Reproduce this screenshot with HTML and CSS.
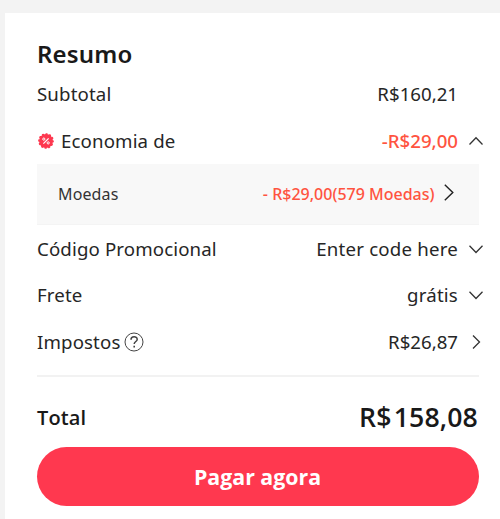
FILE: index.html
```html
<!DOCTYPE html>
<html lang="pt-BR">
<head>
<meta charset="utf-8">
<title>Resumo</title>
<link rel="stylesheet" href="styles.css">
</head>
<body>
<main class="card">
  <h1 class="title">Resumo</h1>
  <div class="row subtotal"><span class="label">Subtotal</span><span class="value">R$160,21</span></div>
  <div class="row savings">
    <svg class="badge" viewBox="0 0 16 16"><circle cx="8" cy="8" r="7" fill="#fd384f"/><circle cx="8" cy="8" r="7" fill="none" stroke="#fd384f" stroke-width="1.7" stroke-linecap="round" stroke-dasharray="0.7 2.965"/><path d="M5.4 10.7l5.2-5.4" stroke="#fff" stroke-width="1.2"/><circle cx="5.8" cy="6.1" r="1.1" fill="none" stroke="#fff"/><circle cx="10.2" cy="9.9" r="1.1" fill="none" stroke="#fff"/></svg>
    <span class="label">Economia de</span><span class="value red">-R$29,00</span>
    <svg class="chevron" viewBox="0 0 14 14"><path d="M.5 10.5L7 3.8l6.5 6.7"/></svg>
  </div>
  <div class="coins">
    <span class="label">Moedas</span><span class="coins-value">- R$29,00(579 Moedas)</span>
    <svg class="coins-arrow" viewBox="0 0 10 17"><path d="M.8.8l8 7.7-8 7.7"/></svg>
  </div>
  <div class="row promo"><span class="label">Código Promocional</span><span class="value words">Enter code here</span><svg class="chevron" viewBox="0 0 14 14"><path d="M.5 3.8L7 10.5l6.5-6.7"/></svg></div>
  <div class="row"><span class="label">Frete</span><span class="value words">grátis</span><svg class="chevron" viewBox="0 0 14 14"><path d="M.5 3.8L7 10.5l6.5-6.7"/></svg></div>
  <div class="row"><span class="label">Impostos</span><svg class="help" viewBox="0 0 20 20"><circle cx="10" cy="10" r="9"/><path d="M7 7.7C7 3.9 13.2 4 13.2 7.4c0 2.1-3 2.2-3 4.7" stroke-width="1.5"/><path d="M10.2 13.7v1.7" stroke-width="1.6"/></svg><span class="value">R$26,87</span><svg class="chevron" viewBox="0 0 14 14"><path d="M4 .5l6.5 6.5L4 13.5"/></svg></div>
  <hr class="divider">
  <div class="total"><span>Total</span><span class="total-value"><span class="currency">R$</span>158,08</span></div>
  <button class="pay">Pagar agora</button>
</main>
</body>
</html>
```

FILE: styles.css
```css
* { box-sizing: border-box; }
body {
  margin: 0;
  padding: 13px 0 0 5px;
  background: #f3f3f3;
  color: #262626;
  font-family: "Noto Sans", sans-serif;
  overflow: hidden;
}
.card {
  height: 506px;
  padding: 22px 21px 0 32px;
  background: #fff;
}
.title {
  margin: 0;
  height: 36px;
  font-size: 24px;
  line-height: 37px;
  font-weight: 600;
  letter-spacing: 0.15px;
  color: #191919;
}
.row {
  display: flex;
  align-items: center;
  height: 46.5px;
  font-size: 18.67px;
  line-height: 26px;
  white-space: nowrap;
}
.label { letter-spacing: 0.13px; }
.value { margin-left: auto; }
.words { letter-spacing: 0.2px; }
.subtotal { padding-right: 21px; }
.badge {
  width: 16px;
  height: 16px;
  margin: 0 6.6px 0 1.4px;
}
.red {
  color: #ff5340;
  font-weight: 500;
}
.chevron {
  width: 14px;
  height: 14px;
  margin-left: 11px;
  margin-right: -4px;
  fill: none;
  stroke: #333;
  stroke-width: 1.3;
}
.coins {
  display: flex;
  align-items: center;
  height: 61px;
  padding: 0 25px 0 21px;
  background: #f8f8f8;
  border-bottom: 1px solid #f4f4f4;
  font-size: 16px;
}
.coins .label { color: #333; }
.coins-value {
  margin-left: auto;
  color: #ff5340;
  font-weight: 500;
}
.coins-arrow {
  width: 10px;
  height: 17px;
  margin: -4px 0 0 9.5px;
  fill: none;
  stroke: #222;
  stroke-width: 1.4;
}
.promo { margin-top: 0.6px; }
.help {
  width: 20px;
  height: 20px;
  margin-left: 4px;
  fill: none;
  stroke: #444;
  stroke-width: 1;
}
.divider {
  height: 2px;
  margin: 10.4px 0 0;
  border: 0;
  background: #f2f2f2;
}
.total {
  display: flex;
  align-items: center;
  justify-content: space-between;
  height: 70px;
  padding-top: 10px;
  color: #191919;
  font-family: "Open Sans", sans-serif;
  font-size: 20px;
  font-weight: 650;
  letter-spacing: 0.15px;
}
.total-value {
  margin-top: -2px;
  margin-right: 1px;
  font-size: 26.67px;
}
.currency { margin-right: 2px; }
.pay {
  display: block;
  width: 100%;
  height: 59px;
  padding: 0 1px 1px 0;
  border: 0;
  border-radius: 30px;
  background: #ff384f;
  color: #fff;
  font: 700 21.33px "Open Sans", sans-serif;
}
```
